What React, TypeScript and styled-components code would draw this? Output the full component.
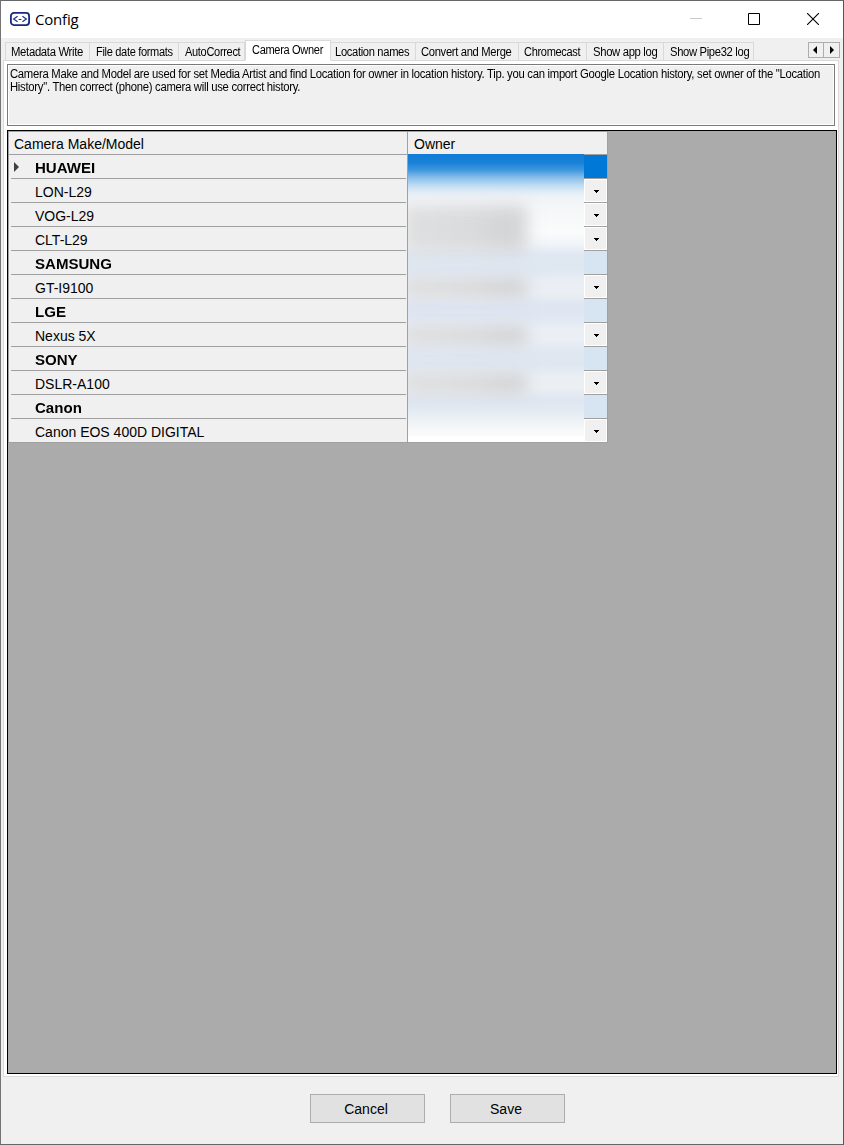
import React from "react";
import styled, { createGlobalStyle } from "styled-components";

const GlobalStyle = createGlobalStyle`
  * { box-sizing: border-box; }
  body { margin: 0; background: #f0f0f0; color: #000; }
`;

const Window = styled.div`
  width: 844px;
  height: 1145px;
  display: flex;
  flex-direction: column;
  background: #f0f0f0;
  border: 1px solid #676767;
  border-left-color: #747474;
  border-right-color: #555;
  overflow: hidden;
  font-family: "Liberation Sans", Arial, sans-serif;
`;

const TitleBar = styled.header`
  height: 37px;
  flex: none;
  display: flex;
  align-items: flex-start;
  background: #fff;
  padding: 0 1px 0 9px;
`;

const AppIcon = styled.svg`
  margin-top: 11px;
`;

const Title = styled.h1`
  flex: 1;
  margin: 8px 0 0 5px;
  font: 400 15px/20px "Open Sans", "Noto Sans", sans-serif;
  letter-spacing: -0.2px;
`;

const WindowControl = styled.div`
  width: 58.5px;
  height: 36px;
  display: flex;
  align-items: center;
  justify-content: center;
`;

const TabStrip = styled.nav`
  height: 23px;
  flex: none;
  display: flex;
  align-items: flex-end;
  padding: 0 3px 0 4px;
  margin-bottom: -1px;
  position: relative;
`;

const Tab = styled.div<{ $w: number; $pad: number; $active?: boolean }>`
  width: ${(p) => p.$w}px;
  height: ${(p) => (p.$active ? 21 : 19)}px;
  flex: none;
  border: 1px solid #d9d9d9;
  border-left-width: ${(p) => (p.$active ? 1 : 0)}px;
  border-bottom-color: ${(p) => (p.$active ? "#fff" : "#d9d9d9")};
  background: ${(p) => (p.$active ? "#fff" : "#f0f0f0")};
  padding-left: ${(p) => p.$pad}px;
  font-size: 12px;
  line-height: 18px;
  letter-spacing: -0.35px;
  white-space: nowrap;
  &:first-child { border-left-width: 1px; }
`;

const Condensed = styled.span<{ $x: number }>`
  display: inline-block;
  transform: scaleX(${(p) => p.$x});
  transform-origin: 0 50%;
`;

const Scroller = styled.div`
  display: flex;
  margin: 0 0 3px auto;
`;

const ScrollButton = styled.button`
  width: 16px;
  height: 16px;
  padding: 0 2px 0 0;
  display: flex;
  align-items: center;
  justify-content: center;
  border: 1px solid #adadad;
  background: #f0f0f0;
  & + & { width: 17px; margin-left: -1px; padding: 0; }
`;

const Page = styled.main`
  height: 1017px;
  flex: none;
  margin: 0 4px 0 2px;
  display: flex;
  flex-direction: column;
  background: #fff;
  border: 1px solid #d9d9d9;
  padding: 3px 1px 2px 3px;
`;

const Description = styled.div`
  height: 62px;
  flex: none;
  width: 828px;
  border: 1px solid #7a7a7a;
  background: #f0f0f0;
  box-shadow: inset 0 0 0 1px #fff;
  padding: 3px 0 0 1.5px;
  font-size: 12px;
  line-height: 13px;
`;

const Line = styled.div`
  width: max-content;
  white-space: nowrap;
  letter-spacing: -0.3px;
  transform: scaleX(0.941);
  transform-origin: 0 50%;
`;

const GridPanel = styled.section`
  flex: 1;
  margin-top: 4px;
  border: 1px solid #000;
  background: #ababab;
`;

const Table = styled.div`
  width: 600px;
  position: relative;
  background: #f0f0f0;
  border-right: 1px solid #a0a0a0;
  border-left: 1px solid #a0a0a0;
  border-top: 1px solid #a0a0a0;
`;

const Row = styled.div<{ $head?: boolean }>`
  display: flex;
  height: ${(p) => (p.$head ? 23 : 24)}px;
`;

const NameCell = styled.div<{ $bold?: boolean; $full?: boolean; $head?: boolean }>`
  width: ${(p) => (p.$full ? 398 : 395)}px;
  margin: ${(p) => (p.$full ? "0" : "0 1px 0 2px")};
  padding: ${(p) => (p.$head ? "2px 0 0 5px" : p.$full ? "3px 0 0 26px" : "3px 0 0 24px")};
  border-bottom: 1px solid #a0a0a0;
  font-size: 14px;
  line-height: 20px;
  font-weight: ${(p) => (p.$bold ? 700 : 400)};
  white-space: nowrap;
  position: relative;
`;

const CurrentMark = styled.svg`
  position: absolute;
  left: 3px;
  top: 7px;
`;

const OwnerCell = styled.div<{ $tone: string }>`
  flex: 1;
  display: flex;
  justify-content: flex-end;
  margin-left: 1px;
  background: ${(p) => p.$tone};
  border-bottom: 1px solid #a0a0a0;
`;

const OwnerHead = styled(OwnerCell)`
  justify-content: flex-start;
  padding: 2px 0 0 6px;
  font-size: 14px;
  line-height: 20px;
`;

const Divider = styled.div`
  position: absolute;
  left: 398px;
  top: 0;
  bottom: 0;
  width: 1px;
  background: #a0a0a0;
`;

const DropButton = styled.button`
  width: 23px;
  height: 23px;
  padding: 2px 0 0 1px;
  border: 1px solid #fff;
  background: #f0f0f0;
  display: flex;
  align-items: center;
  justify-content: center;
`;

const Obscured = styled.div`
  position: absolute;
  left: 399px;
  top: 22px;
  width: 176px;
  height: 287px;
  overflow: hidden;
  background: linear-gradient(
    180deg,
    #107cd6 0, #1a82d8 9px, #3f97de 16px, #8cc0eb 24px, #bddaf3 31px, #dceaf6 37px, #eff3f7 43px,
    #f6f7f8 55px, #fafbfb 78px, #f1f4f9 90px, #dfe7f1 101px, #dfe7f2 116px,
    #e9eef4 126px, #ebeff4 139px, #dfe6f2 151px, #dfe7f2 162px, #ebeff5 176px,
    #ebeff5 185px, #dfe7f2 200px, #dfe7f1 211px, #ebeff4 224px, #ebeff4 234px,
    #dfe6f1 246px, #e2eaf2 256px, #eef2f5 267px, #f8f9fa 278px, #fbfbfb 282px, #fff 282px
  );
`;

const Smudge = styled.div<{ $top: number; $h: number; $strength: number }>`
  position: absolute;
  left: -6px;
  top: ${(p) => p.$top}px;
  width: 126px;
  height: ${(p) => p.$h}px;
  opacity: ${(p) => p.$strength};
  background: linear-gradient(90deg, #dcdddd, #d7d8d9 55%, #d0d1d2 85%, #d4d6d7);
  filter: blur(8px);
`;

const Footer = styled.footer`
  display: flex;
  gap: 25px;
  padding: 17px 0 0 309px;
`;

const Button = styled.button`
  width: 115px;
  height: 29px;
  padding: 1px 3px 0 0;
  border: 1px solid #adadad;
  background: #e1e1e1;
  color: #000;
  font: 14px "Liberation Sans", Arial, sans-serif;
`;

const tabs = [
  { label: "Metadata Write", w: 85, x: 0.945, pad: 5 },
  { label: "File date formats", w: 89, x: 0.92, pad: 6 },
  { label: "AutoCorrect", w: 66, x: 0.92, pad: 6 },
  { label: "Camera Owner", w: 86, x: 0.92, pad: 6, active: true },
  { label: "Location names", w: 85, x: 0.93, pad: 4 },
  { label: "Convert and Merge", w: 103, x: 0.935, pad: 5 },
  { label: "Chromecast", w: 68, x: 0.92, pad: 5 },
  { label: "Show app log", w: 77, x: 0.94, pad: 6 },
  { label: "Show Pipe32 log", w: 90, x: 0.935, pad: 6 },
];

const cameras = [
  { name: "HUAWEI", make: true },
  { name: "LON-L29" },
  { name: "VOG-L29" },
  { name: "CLT-L29" },
  { name: "SAMSUNG", make: true },
  { name: "GT-I9100" },
  { name: "LGE", make: true },
  { name: "Nexus 5X" },
  { name: "SONY", make: true },
  { name: "DSLR-A100" },
  { name: "Canon", make: true },
  { name: "Canon EOS 400D DIGITAL" },
];

const smudges = [
  { top: 51, h: 47, strength: 0.9 },
  { top: 124, h: 19, strength: 1 },
  { top: 172, h: 19, strength: 1 },
  { top: 220, h: 19, strength: 1 },
];

export default function App() {
  return (
    <>
      <GlobalStyle />
      <Window>
        <TitleBar>
          <AppIcon width="20" height="14" viewBox="0 0 20 14" fill="none">
            <rect x="0.9" y="0.9" width="18.2" height="12.2" rx="3" stroke="#172983" strokeWidth="1.8" />
            <path d="M7.6 4.2 3.6 7l4 2.8M12.4 4.2l4 2.8-4 2.8M8.6 7.5h2.8" stroke="#172983" strokeWidth="1.1" />
          </AppIcon>
          <Title>Config</Title>
          <WindowControl>
            <svg width="12" height="12"><path d="M0 5.5h12" stroke="#ccc" /></svg>
          </WindowControl>
          <WindowControl>
            <svg width="12" height="12"><path d="M.5.5h11v11H.5z" fill="none" stroke="#000" /></svg>
          </WindowControl>
          <WindowControl>
            <svg width="12" height="12"><path d="m0 0 12 12M12 0 0 12" stroke="#000" strokeWidth="1.1" /></svg>
          </WindowControl>
        </TitleBar>
        <TabStrip>
          {tabs.map((t) => (
            <Tab key={t.label} $w={t.w} $pad={t.pad} $active={t.active}>
              <Condensed $x={t.x}>{t.label}</Condensed>
            </Tab>
          ))}
          <Scroller>
            <ScrollButton aria-label="Scroll left">
              <svg width="4" height="8"><path d="M4 0v8L0 4z" /></svg>
            </ScrollButton>
            <ScrollButton aria-label="Scroll right">
              <svg width="4" height="8"><path d="M0 0v8l4-4z" /></svg>
            </ScrollButton>
          </Scroller>
        </TabStrip>
        <Page>
          <Description>
            <Line>
              Camera Make and Model are used for set Media Artist and find Location for owner in location history. Tip. you can import Google Location history, set owner of the "Location
            </Line>
            <Line>History". Then correct (phone) camera will use correct history.</Line>
          </Description>
          <GridPanel>
            <Table>
              <Row $head>
                <NameCell $head $full>Camera Make/Model</NameCell>
                <OwnerHead $tone="#f0f0f0">Owner</OwnerHead>
              </Row>
              {cameras.map((c, i) => (
                <Row key={c.name}>
                  <NameCell $bold={c.make} $full={i === cameras.length - 1}>
                    {i === 0 && (
                      <CurrentMark width="5" height="10"><path d="M0 0v10l5-5z" fill="#404040" /></CurrentMark>
                    )}
                    {c.make ? <Condensed $x={1.075}>{c.name}</Condensed> : c.name}
                  </NameCell>
                  <OwnerCell $tone={i === 0 ? "#0078d7" : c.make ? "#d7e4f2" : "#fff"}>
                    {!c.make && (
                      <DropButton aria-label={`Owner of ${c.name}`}>
                        <svg width="5" height="3" shapeRendering="crispEdges">
                          <path d="M0 0h5v1H0zM1 1h3v1H1zM2 2h1v1H2z" />
                        </svg>
                      </DropButton>
                    )}
                  </OwnerCell>
                </Row>
              ))}
              <Divider />
              <Obscured>
                {smudges.map((s) => <Smudge key={s.top} $top={s.top} $h={s.h} $strength={s.strength} />)}
              </Obscured>
            </Table>
          </GridPanel>
        </Page>
        <Footer>
          <Button>Cancel</Button>
          <Button>Save</Button>
        </Footer>
      </Window>
    </>
  );
}
